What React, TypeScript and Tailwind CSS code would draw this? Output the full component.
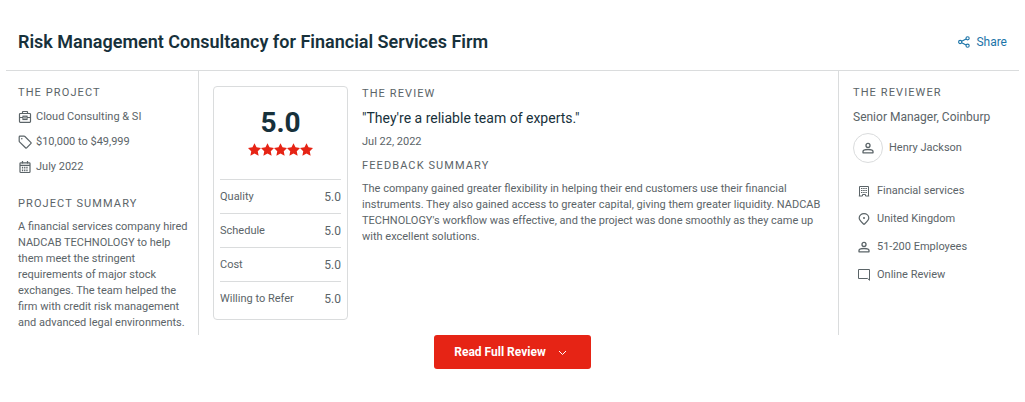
import React from 'react';

interface Detail {
  label: string;
  icon: React.ReactNode;
}

const BriefcaseIcon = () => (
  <svg width="14" height="14" viewBox="0 0 14 14" fill="none" stroke="currentColor" strokeWidth="1.200" aria-hidden="true">
    <rect x="1.500" y="3.500" width="11" height="8.800" rx="0.800" />
    <path d="M4.500 3.500V2c0-.3.200-.5.500-.5h4c.3 0 .5.200.5.500v1.500M1.500 7.500h3.500M9 7.500h3.500" />
    <rect x="5" y="6.200" width="4" height="3.300" />
    <path d="M7 7v1.800" />
  </svg>
);

const TagIcon = () => (
  <svg width="14" height="14" viewBox="0 0 14 14" fill="none" stroke="currentColor" aria-hidden="true">
    <path
      strokeWidth="1.200"
      strokeLinejoin="round"
      d="M1.200 2v4.100c0 .3.100.6.300.8l6 5.800c.4.400 1 .4 1.400 0l3.900-4c.4-.4.400-1 0-1.400L6.900 1.500a1.100 1.100 0 0 0-.8-.3H2c-.5 0-.8.3-.8.8z"
    />
    <circle cx="3.800" cy="3.800" r="0.800" fill="currentColor" stroke="none" />
  </svg>
);

const CalendarIcon = () => (
  <svg width="14" height="14" viewBox="0 0 14 14" fill="none" stroke="currentColor" strokeWidth="1.200" aria-hidden="true">
    <rect x="2" y="2.800" width="10" height="9.700" rx="0.800" />
    <path d="M2 5.300h10M4.500 1v2.500M9.500 1v2.500" />
    <path strokeDasharray="1.300 0.900" d="M3.900 7.300h6.500M3.900 9h6.500M3.900 10.700h6.500" />
  </svg>
);

const BuildingIcon = () => (
  <svg width="12" height="12" viewBox="0 0 12 12" fill="none" stroke="currentColor" aria-hidden="true">
    <path d="M1.500 11V1.500h9V11M.8 11h3.700V9.500h3V11h3.700" />
    <path strokeDasharray="1.500 0.700" d="M3 3.500h6.200M3 5.500h6.200M3 7.500h6.200" />
  </svg>
);

const PinIcon = () => (
  <svg width="12" height="12" viewBox="0 0 12 12" fill="none" stroke="currentColor" strokeWidth="1.200" aria-hidden="true">
    <path d="M6 11.400C3.500 9 1.200 7.400 1.200 5a4.800 4.400 0 0 1 9.600 0C10.800 7.400 8.500 9 6 11.400z" />
    <circle cx="6" cy="5" r="1" fill="currentColor" stroke="none" />
  </svg>
);

const PersonIcon = () => (
  <svg width="12" height="12" viewBox="0 0 12 12" fill="none" stroke="currentColor" strokeWidth="1.300" aria-hidden="true">
    <circle cx="6" cy="3.400" r="2" />
    <path strokeLinejoin="round" d="M1 10.800V9.600C1 8.300 3.500 7.500 6 7.500s5 .8 5 2.100v1.200z" />
  </svg>
);

const CommentIcon = () => (
  <svg width="12" height="12" viewBox="0 0 12 12" fill="none" stroke="currentColor" aria-hidden="true">
    <path d="M.5.500h11v10.800L9.700 9.500H.5z" />
  </svg>
);

const ShareIcon = () => (
  <svg width="12" height="12" viewBox="0 0 12 12" fill="none" stroke="currentColor" strokeWidth="1.100" aria-hidden="true">
    <circle cx="2.200" cy="6" r="1.600" />
    <circle cx="9.600" cy="2.300" r="1.600" />
    <circle cx="9.600" cy="9.700" r="1.600" />
    <path d="M3.700 5.300l4.400-2.200M3.700 6.700l4.400 2.200" />
  </svg>
);

const StarIcon = () => (
  <svg width="13" height="13" viewBox="0 0 24 24" fill="currentColor" aria-hidden="true">
    <path d="M12 .3l3.700 7.700 8.300 1.200-6 5.900 1.600 8.500-7.600-4-7.600 4L6 15.100 0 9.200 8.300 8z" />
  </svg>
);

const project: Detail[] = [
  { label: 'Cloud Consulting & SI', icon: <BriefcaseIcon /> },
  { label: '$10,000 to $49,999', icon: <TagIcon /> },
  { label: 'July 2022', icon: <CalendarIcon /> },
];

const reviewer: Detail[] = [
  { label: 'Financial services', icon: <BuildingIcon /> },
  { label: 'United Kingdom', icon: <PinIcon /> },
  { label: '51-200 Employees', icon: <PersonIcon /> },
  { label: 'Online Review', icon: <CommentIcon /> },
];

const ratings = [
  { label: 'Quality', score: '5.0' },
  { label: 'Schedule', score: '5.0' },
  { label: 'Cost', score: '5.0' },
  { label: 'Willing to Refer', score: '5.0' },
];

function SectionTitle({ children }: { children: React.ReactNode }) {
  return <h3 className="text-[11px] leading-4 tracking-widest uppercase">{children}</h3>;
}

export default function App() {
  return (
    <article className="px-1.5 pt-[29px] pb-8 bg-white font-[Roboto,sans-serif] text-[11px] leading-4 text-[#5b6468]">
      <header className="flex items-center justify-between px-3 pb-[15px] border-b border-[#dadcdd]">
        <h2 className="text-lg leading-[26px] font-semibold text-[#17313b]">
          Risk Management Consultancy for Financial Services Firm
        </h2>
        <button type="button" className="flex items-center gap-1.5 text-xs leading-4 text-[#1b74a8]">
          <ShareIcon />
          Share
        </button>
      </header>

      <div className="flex">
        <section className="w-[193px] shrink-0 pl-3 pr-2 pt-3.5 pb-1 border-r border-[#dadcdd]">
          <SectionTitle>The Project</SectionTitle>
          <ul className="flex flex-col gap-[9px] pt-2">
            {project.map((item) => (
              <li key={item.label} className="flex items-center gap-1">
                {item.icon}
                {item.label}
              </li>
            ))}
          </ul>
          <div className="pt-[21px]">
            <SectionTitle>Project Summary</SectionTitle>
            <p className="pt-[7px]">
              A financial services company hired NADCAB TECHNOLOGY to help them meet the stringent
              requirements of major stock exchanges. The team helped the firm with credit risk
              management and advanced legal environments.
            </p>
          </div>
        </section>

        <section className="flex grow items-start gap-3.5 px-3.5 pt-[15px]">
          <div className="w-[135px] shrink-0 px-1.5 pb-1 border border-[#dadcdd] rounded">
            <div className="flex flex-col items-center pt-5 pb-[23px]">
              <p className="text-[28px] leading-8 font-bold text-[#17313b]">5.0</p>
              <div className="flex pt-1 text-[#e62415]">
                {ratings.map((item) => (
                  <StarIcon key={item.label} />
                ))}
                <StarIcon />
              </div>
            </div>
            <dl>
              {ratings.map((item) => (
                <div
                  key={item.label}
                  className="flex h-[34px] items-center justify-between border-t border-[#dadcdd]"
                >
                  <dt>{item.label}</dt>
                  <dd className="text-xs leading-4">{item.score}</dd>
                </div>
              ))}
            </dl>
          </div>

          <div className="grow basis-0">
            <SectionTitle>The Review</SectionTitle>
            <p className="pt-[7px] text-sm leading-[18px] text-[#17313b]">
              "They're a reliable team of experts."
            </p>
            <p className="pt-[7px]">Jul 22, 2022</p>
            <div className="pt-2">
              <SectionTitle>Feedback Summary</SectionTitle>
            </div>
            <p className="pt-[7px]">
              The company gained greater flexibility in helping their end customers use their
              financial instruments. They also gained access to greater capital, giving them greater
              liquidity. NADCAB TECHNOLOGY's workflow was effective, and the project was done
              smoothly as they came up with excellent solutions.
            </p>
          </div>
        </section>

        <section className="w-[181px] shrink-0 pl-3.5 pt-3.5 border-l border-[#dadcdd]">
          <SectionTitle>The Reviewer</SectionTitle>
          <p className="pt-2 text-xs leading-4">Senior Manager, Coinburp</p>
          <div className="flex items-center gap-1.5 pt-2">
            <span className="flex size-[30px] items-center justify-center border border-[#dadcdd] rounded-full">
              <PersonIcon />
            </span>
            Henry Jackson
          </div>
          <ul className="flex flex-col gap-3 pt-5 pl-[5px]">
            {reviewer.map((item) => (
              <li key={item.label} className="flex items-center gap-[7px]">
                {item.icon}
                {item.label}
              </li>
            ))}
          </ul>
        </section>
      </div>

      <div className="flex justify-center">
        <button
          type="button"
          className="flex items-center gap-3 h-[34px] pl-5 pr-6 rounded-[3px] bg-[#e62415] text-xs leading-4 font-bold text-white"
        >
          Read Full Review
          <svg width="9" height="9" viewBox="0 0 9 9" fill="none" stroke="currentColor" aria-hidden="true">
            <path d="M1 3l3.500 3.500L8 3" />
          </svg>
        </button>
      </div>
    </article>
  );
}
